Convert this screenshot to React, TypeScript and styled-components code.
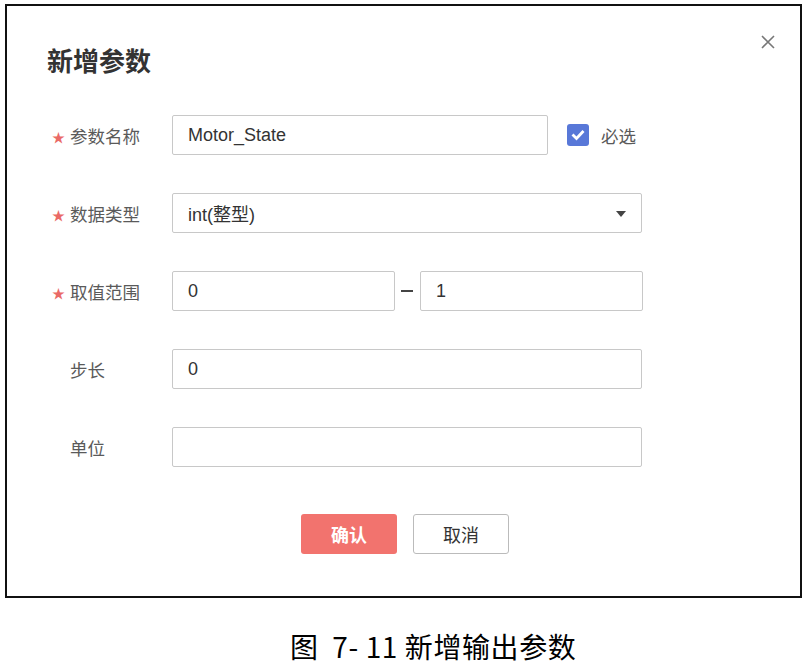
import React from 'react';
import styled, { createGlobalStyle } from 'styled-components';

interface FieldProp {
  label: string;
  required?: boolean;
  children: React.ReactNode;
};

const Field = (props: FieldProp) => (
  <Row>
    <Label>
      <Star>{props.required ? '★' : ''}</Star>
      {props.label}
    </Label>
    <Control>{props.children}</Control>
  </Row>
);

const App = () => (
  <Page>
    <GlobalStyle />
    <Frame>
      <Close aria-label="close">
        <svg width="16" height="16" viewBox="0 0 16 16">
          <path d="M2 2 L14 14 M14 2 L2 14" stroke="#777" strokeWidth="1.6" fill="none" />
        </svg>
      </Close>
      <Title>新增参数</Title>
      <Form>
        <Field label="参数名称" required>
          <Input width={376}>Motor_State</Input>
          <Check>
            <svg width="16" height="14" viewBox="0 0 16 14">
              <path d="M2.5 6.5 L6.5 10.5 L13.5 3" stroke="#fff" strokeWidth="2.8" fill="none" />
            </svg>
          </Check>
          <CheckText>必选</CheckText>
        </Field>
        <Field label="数据类型" required>
          <Input width={470}>
            int(整型)
            <Arrow />
          </Input>
        </Field>
        <Field label="取值范围" required>
          <Input width={223}>0</Input>
          <Dash />
          <Input width={223}>1</Input>
        </Field>
        <Field label="步长">
          <Input width={470}>0</Input>
        </Field>
        <Field label="单位">
          <Input width={470} />
        </Field>
        <Buttons>
          <Confirm>确认</Confirm>
          <Cancel>取消</Cancel>
        </Buttons>
      </Form>
    </Frame>
    <Caption>{'图  7- 11 新增输出参数'}</Caption>
  </Page>
);

export default App;

const GlobalStyle = createGlobalStyle`
  body {
    margin: 0;
    background: #fff;
    font-family: "Noto Sans CJK SC", "Noto Sans", sans-serif;
  }
`;

const Page = styled.div`
  width: 808px;
  height: 670px;
  padding-top: 4px;
  box-sizing: border-box;
`;

const Frame = styled.div`
  position: relative;
  margin-left: 5px;
  width: 797px;
  height: 594px;
  border: 2px solid #111;
  box-sizing: border-box;
  padding: 39px 0 0 40px;
`;

const Close = styled.div`
  position: absolute;
  top: 25px;
  right: 24px;
  width: 16px;
  height: 16px;
`;

const Title = styled.h2`
  margin: 0;
  font-size: 26px;
  line-height: 30px;
  font-weight: 700;
  color: #333;
`;

const Form = styled.div`
  margin-top: 40px;
  margin-left: 5px;
  display: flex;
  flex-direction: column;
  gap: 38px;
`;

const Row = styled.div`
  display: flex;
  align-items: center;
  height: 40px;
`;

const Label = styled.div`
  width: 120px;
  display: flex;
  align-items: center;
  font-size: 17.5px;
  color: #5a5a5a;
`;

const Star = styled.span`
  width: 18px;
  color: #ea6a66;
  font-size: 13px;
  padding-top: 2px;
`;

const Control = styled.div`
  display: flex;
  align-items: center;
`;

const Input = styled.div<{ width: number }>`
  position: relative;
  width: ${(p) => p.width}px;
  height: 40px;
  box-sizing: border-box;
  border: 1px solid #c8c8c8;
  border-radius: 2px;
  padding-left: 15px;
  display: flex;
  align-items: center;
  font-size: 18px;
  color: #333;
  font-family: "Liberation Sans", "Noto Sans CJK SC", sans-serif;
`;

const Arrow = styled.span`
  position: absolute;
  right: 15px;
  top: 17px;
  border-left: 5px solid transparent;
  border-right: 5px solid transparent;
  border-top: 6px solid #444;
`;

const Dash = styled.span`
  width: 12px;
  height: 2px;
  background: #444;
  margin: 0 7px 0 6px;
`;

const Check = styled.span`
  margin-left: 19px;
  width: 22px;
  height: 22px;
  border-radius: 3px;
  background: #5878d8;
  display: flex;
  align-items: center;
  justify-content: center;
`;

const CheckText = styled.span`
  margin-left: 12px;
  font-size: 17.5px;
  color: #5a5a5a;
`;

const Buttons = styled.div`
  display: flex;
  gap: 16px;
  margin-left: 249px;
  margin-top: 9px;
`;

const Confirm = styled.div`
  width: 96px;
  height: 40px;
  border-radius: 3px;
  background: #f2736e;
  color: #fff;
  font-size: 18px;
  font-weight: 700;
  display: flex;
  align-items: center;
  justify-content: center;
`;

const Cancel = styled.div`
  width: 96px;
  height: 40px;
  box-sizing: border-box;
  border: 1px solid #bbb;
  border-radius: 3px;
  background: #fff;
  color: #333;
  font-size: 18px;
  display: flex;
  align-items: center;
  justify-content: center;
`;

const Caption = styled.div`
  margin-top: 30px;
  padding-left: 290px;
  font-size: 28px;
  line-height: 36px;
  font-weight: 400;
  color: #000;
  white-space: pre;
  letter-spacing: 0.6px;
`;
